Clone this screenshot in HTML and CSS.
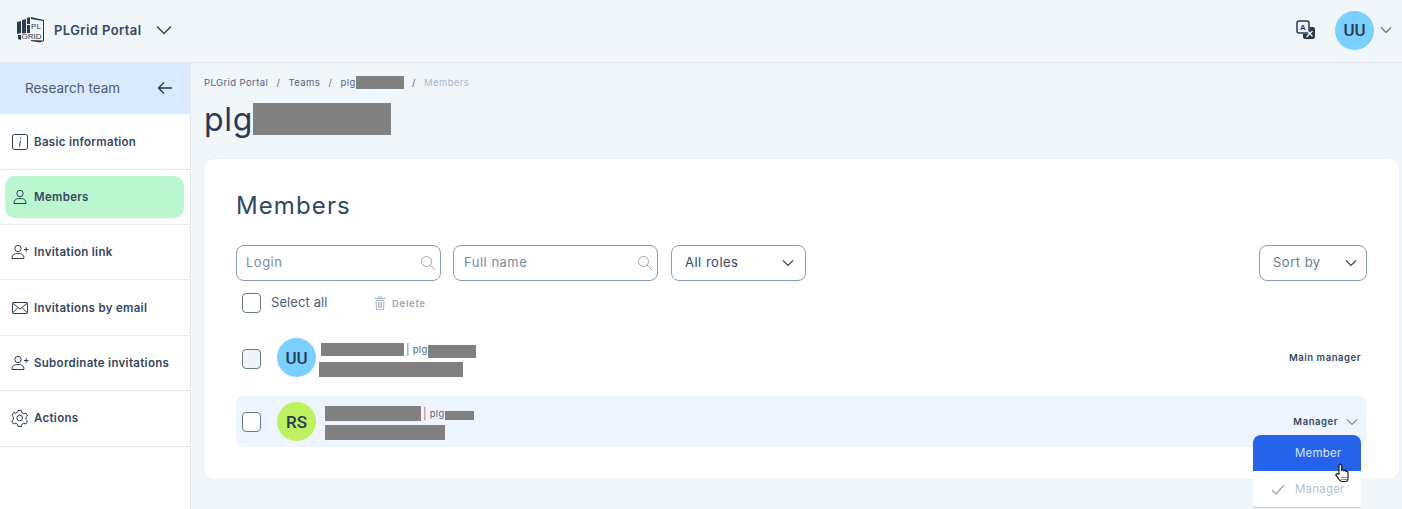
FILE: index.html
```html
<!DOCTYPE html>
<html lang="en">
<head>
<meta charset="utf-8">
<title>PLGrid Portal</title>
<link rel="stylesheet" href="styles.css">
</head>
<body>
<header class="topbar">
  <div class="brand">
    <svg class="logo" width="30" height="30" viewBox="0 0 30 30">
      <path class="logo-dark" d="M1 7l4-1v12l-4 1zM6 5l4-1v14l-4 .5zM11 3l3-1v7h-3zM11 10h3v8h-3z"/>
      <path class="logo-dark" d="M2 20h3v5l-3-1zM15 2l13 3v21l-4 1.500-9-1.500v-1l12 .5V6L15 4z"/>
      <text class="logo-text" x="20" y="14" text-anchor="middle">PL</text>
      <text class="logo-text" x="15.500" y="24" text-anchor="middle">GRID</text>
    </svg>
    <span class="brand-name">PLGrid Portal</span>
    <svg class="brand-caret" width="16" height="10" viewBox="0 0 16 10"><path d="M1 1.500l7 7 7-7"/></svg>
  </div>
  <div class="top-right">
    <svg class="translate" width="20" height="20" viewBox="0 0 20 20">
      <rect class="tr-box" x="1" y="1" width="12" height="12" rx="2"/>
      <path class="tr-dark" d="M13.800 7H17a2 2 0 0 1 2 2v8a2 2 0 0 1-2 2H9a2 2 0 0 1-2-2v-3h6.800z"/>
      <text class="tr-a" x="7" y="10.200" text-anchor="middle">A</text>
      <path class="tr-x" d="M10.500 17l6-6M12 11.500l4.500 5"/>
    </svg>
    <span class="avatar avatar-blue">UU</span>
    <svg class="user-caret" width="12" height="8" viewBox="0 0 12 8"><path d="M1 1.500l5 5 5-5"/></svg>
  </div>
</header>
<div class="shell">
  <aside class="sidebar">
    <div class="side-head">
      <span>Research team</span>
      <svg class="stroke-icon head-arrow" width="16" height="14" viewBox="0 0 16 14"><path d="M15 7H2M7 1.500L1.500 7 7 12.500"/></svg>
    </div>
    <nav class="side-nav">
      <div class="side-item">
        <svg class="stroke-icon" width="18" height="18" viewBox="0 0 18 18"><rect x="1.500" y="1.500" width="15" height="15" rx="2"/><path d="M9.500 7.500l-1 6M9.700 4.500v1.400"/></svg>
        <span>Basic information</span>
      </div>
      <div class="side-item side-item-active">
        <div class="side-pill">
          <svg class="stroke-icon" width="18" height="18" viewBox="0 0 18 18"><circle cx="9" cy="5.500" r="3.200"/><path d="M3 15.500c0-4 2.500-5 6-5s6 1 6 5z"/></svg>
          <span>Members</span>
        </div>
      </div>
      <div class="side-item">
        <svg class="stroke-icon" width="18" height="18" viewBox="0 0 18 18"><circle cx="7" cy="5.500" r="3.200"/><path d="M1 15.500c0-4 2.500-5 6-5s6 1 6 5zM13 6.500h4.500M15.200 4.200v4.600"/></svg>
        <span>Invitation link</span>
      </div>
      <div class="side-item">
        <svg class="stroke-icon" width="18" height="18" viewBox="0 0 18 18"><rect x="1.500" y="3.500" width="15" height="11" rx="1"/><path d="M1.500 4l7.500 6 7.500-6M1.500 14l5.500-5.500M16.500 14L11 8.500"/></svg>
        <span>Invitations by email</span>
      </div>
      <div class="side-item">
        <svg class="stroke-icon" width="18" height="18" viewBox="0 0 18 18"><circle cx="7" cy="5.500" r="3.200"/><path d="M1 15.500c0-4 2.500-5 6-5s6 1 6 5zM13 6.500h4.500M15.200 4.200v4.600"/></svg>
        <span>Subordinate invitations</span>
      </div>
      <div class="side-item">
        <svg class="stroke-icon" width="18" height="18" viewBox="0 0 18 18"><circle cx="8.700" cy="9" r="2.800"/><path d="M7 1.500h3.400l.5 2.200 1.700 1 2.200-.7 1.700 3-1.600 1.500v2l1.600 1.500-1.700 3-2.200-.7-1.700 1-.5 2.200H7l-.5-2.200-1.700-1-2.200.7-1.700-3L2.500 10V8L.9 6.500l1.700-3 2.200.7 1.700-1z"/></svg>
        <span>Actions</span>
      </div>
    </nav>
  </aside>
  <main class="content">
    <div class="crumbs">
      <span>PLGrid Portal</span><i>/</i>
      <span>Teams</span><i>/</i>
      <span>plg<b class="redact crumb-redact"></b></span><i>/</i>
      <span class="crumb-current">Members</span>
    </div>
    <h1 class="page-title">plg<b class="redact title-redact"></b></h1>
    <section class="card">
      <h2 class="card-title">Members</h2>
      <div class="filters">
        <div class="field field-search"><span>Login</span><svg class="search" width="16" height="16" viewBox="0 0 16 16"><circle cx="6.500" cy="6.500" r="5"/><path d="M10.200 10.200l4.800 4.800"/></svg></div>
        <div class="field field-search"><span>Full name</span><svg class="search" width="16" height="16" viewBox="0 0 16 16"><circle cx="6.500" cy="6.500" r="5"/><path d="M10.200 10.200l4.800 4.800"/></svg></div>
        <div class="field field-select"><span>All roles</span><svg class="select-caret" width="12" height="8" viewBox="0 0 12 8"><path d="M1 1.500l5 5 5-5"/></svg></div>
        <div class="field field-sort"><span>Sort by</span><svg class="select-caret" width="12" height="8" viewBox="0 0 12 8"><path d="M1 1.500l5 5 5-5"/></svg></div>
      </div>
      <div class="select-row">
        <span class="check"></span>
        <span class="select-label">Select all</span>
        <svg class="trash" width="14" height="14" viewBox="0 0 14 14"><path d="M1.500 2.500h11M5 2.500V1h4v1.500M3 4.500l.5 9h7l.5-9zM5.500 6v6M7 6v6M8.500 6v6"/></svg>
        <span class="delete-label">Delete</span>
      </div>
      <div class="member member-first">
        <span class="check check-tint"></span>
        <span class="avatar avatar-blue">UU</span>
        <div class="member-info info-first">
          <div class="member-line"><b class="redact r-name-1"></b><i class="pipe">|</i><span class="login">plg</span><b class="redact r-login-1"></b></div>
          <b class="redact r-mail-1"></b>
        </div>
        <span class="role">Main manager</span>
      </div>
      <div class="member member-hover">
        <span class="check"></span>
        <span class="avatar avatar-green">RS</span>
        <div class="member-info info-second">
          <div class="member-line"><b class="redact r-name-2"></b><i class="pipe">|</i><span class="login">plg</span><b class="redact r-login-2"></b></div>
          <b class="redact r-mail-2"></b>
        </div>
        <span class="role">Manager</span>
        <svg class="role-caret" width="12" height="8" viewBox="0 0 12 8"><path d="M1 1.500l5 5 5-5"/></svg>
        <div class="menu">
          <div class="menu-item menu-item-on">Member</div>
          <div class="menu-item menu-item-off">
            <svg class="tick" width="14" height="11" viewBox="0 0 14 11"><path d="M1 6l4 4 8-9"/></svg>
            Manager
          </div>
          <svg class="hand" width="18" height="20" viewBox="0 0 18 20"><path d="M5 11V2.500a1.300 1.300 0 0 1 2.600 0V8l.3-1.200c1-.5 2 0 2 .8.800-.6 2-.2 2 .8.800-.5 2.100 0 2.100 1V15c0 2-1 3.500-2.500 3.500H7.500c-1.500 0-2-1-3-3L2 12.500c-.7-1.200.8-2.500 2-1.300z"/><path class="hand-lines" d="M8 14v3M10 14v3M12 14v3"/></svg>
        </div>
      </div>
    </section>
  </main>
</div>
</body>
</html>
```
FILE: styles.css
```css
* { box-sizing: border-box; }
html, body { margin: 0; height: 509px; overflow: hidden; }
body {
  background: #f1f6fa;
  color: #2b3a55;
  font-family: "Inter", "Open Sans", sans-serif;
}
b, i { font-style: normal; font-weight: normal; }

.topbar {
  height: 63px;
  display: flex;
  align-items: center;
  justify-content: space-between;
  border-bottom: 1px solid #e4e8ee;
  padding: 0 16px 2px;
}
.brand { display: flex; align-items: center; }
.logo { margin-right: 8px; }
.logo-dark { fill: #2b3a4d; }
.logo-text { font: 400 8px "Liberation Sans", sans-serif; fill: #2b3a4d; }
.brand-name { font-size: 13px; font-weight: 600; letter-spacing: .4px; color: #35475f; width: 102px; white-space: nowrap; }
.brand-caret { fill: none; stroke: #2b3a55; stroke-width: 1.300; }
.top-right { display: flex; align-items: center; margin-right: -6px; }
.translate { margin-right: 19px; }
.tr-box { fill: #f1f6fa; stroke: #2b3a4d; stroke-width: 1.500; }
.tr-dark { fill: #2b3a4d; }
.tr-a { font: 700 8px "Liberation Sans", sans-serif; fill: #2b3a4d; }
.tr-x { fill: none; stroke: #f1f6fa; stroke-width: 1.200; }
.user-caret { margin-left: 6px; fill: none; stroke: #5f6f87; stroke-width: 1.200; }

.avatar {
  width: 39px;
  height: 39px;
  border-radius: 50%;
  display: flex;
  align-items: center;
  justify-content: center;
  flex: none;
  font-family: "Roboto", sans-serif;
  font-size: 17px;
  font-weight: 500;
  color: #2b3a55;
}
.avatar-blue { background: #7ad0ff; }
.avatar-green { background: #bff05f; }

.shell { display: flex; height: 446px; }
.sidebar {
  width: 191px;
  flex: none;
  background: #fff;
  border-right: 1px solid #e4e8ee;
}
.side-head {
  height: 51px;
  background: #dbe9fe;
  display: flex;
  align-items: center;
  justify-content: space-between;
  padding: 0 17px 2px 25px;
  font-size: 13.500px;
  color: #4d5c75;
}
.stroke-icon { fill: none; stroke: #2b3a55; stroke-width: 1; flex: none; }
.head-arrow { stroke-width: 1.400; }
.side-nav { padding-top: .4px; }
.side-item {
  height: 55.360px;
  display: flex;
  align-items: center;
  gap: 5px;
  padding: 0 0 0 11px;
  border-bottom: 1px solid #e4e8ee;
  font-size: 11.500px;
  font-weight: 600;
  letter-spacing: .3px;
  color: #35475f;
  white-space: nowrap;
}
.side-item-active { padding: 0 6px 0 5px; }
.side-pill {
  flex: 1;
  height: 42px;
  background: #baf7d0;
  border-radius: 10px;
  display: flex;
  align-items: center;
  gap: 5px;
  padding-left: 6px;
}

.content { flex: 1; padding: 0 3px 0 13px; min-width: 0; }
.crumbs {
  height: 39px;
  display: flex;
  align-items: center;
  font-size: 9.500px;
  letter-spacing: .4px;
  color: #55637a;
  white-space: nowrap;
}
.crumbs i { margin: 0 8.250px; }
.crumbs span { display: flex; align-items: center; }
.crumb-current { color: #a9b7cc; }
.redact { display: block; background: #808080; flex: none; }
.crumb-redact { width: 48px; height: 13px; }
.page-title {
  margin: 0;
  height: 57px;
  display: flex;
  align-items: flex-start;
  font-size: 32px;
  font-weight: 400;
  letter-spacing: .7px;
  line-height: 36px;
  color: #2b3a55;
}
.title-redact { width: 138px; height: 32px; margin-top: 1px; }
.card {
  height: 320px;
  background: #fff;
  border-radius: 10px;
  padding: 31px 32px 0;
  box-shadow: 0 0 2px rgba(40, 60, 90, .08);
}
.card-title {
  margin: 0 0 23px;
  height: 32px;
  font-size: 24px;
  line-height: 32px;
  font-weight: 400;
  letter-spacing: 1.100px;
  color: #35475f;
}
.filters { display: flex; gap: 12px; height: 36px; }
.field {
  height: 36px;
  border: 1px solid #8c9bb0;
  border-radius: 8px;
  display: flex;
  align-items: center;
  justify-content: space-between;
  padding-bottom: 2px;
  font-size: 13px;
  letter-spacing: .5px;
  color: #7b8aa3;
  background: #fff;
}
.field-search { width: 205px; padding-left: 9px; padding-right: 2px; }
.field-search + .field-search { padding-left: 10px; }
.field-select { width: 135px; margin-left: 1px; padding-left: 13px; padding-right: 11px; color: #35475f; }
.field-sort { width: 108px; margin-left: auto; padding-left: 13px; padding-right: 9px; color: #6b7a92; }
.search { fill: none; stroke: #9ba8bb; stroke-width: 1; margin: 2px 2px 0 0; }
.select-caret { fill: none; stroke: #35475f; stroke-width: 1.200; margin-top: 2px; }
.select-row {
  display: flex;
  align-items: center;
  height: 52px;
  padding: 0 0 8px 6px;
}
.check {
  width: 19px;
  height: 20px;
  flex: none;
  border: 1.500px solid #6a788c;
  border-radius: 4px;
  background: #fff;
}
.check-tint { background: #f0f4fa; margin-top: 2px; }
.select-label { margin: 0 0 2px 10px; font-size: 13px; letter-spacing: .1px; color: #4d5c75; width: 102px; }
.trash { fill: none; stroke: #a9b5c6; stroke-width: 1; }
.delete-label { margin-left: 5px; font-size: 9.500px; font-weight: 600; letter-spacing: .7px; color: #98a6bb; }
.member {
  position: relative;
  height: 51px;
  margin-bottom: 12px;
  border-radius: 8px;
  display: flex;
  align-items: center;
  padding: 0 6px;
}
.member-first { padding-bottom: 2px; }
.member-hover { background: #eef5fe; }
.member .avatar { margin-left: 16px; }
.member-info { display: flex; flex-direction: column; gap: 5px; }
.info-first { margin: 4px 0 0 3px; }
.info-second { margin: 3px 0 0 9px; gap: 4px; }
.member-line { display: flex; align-items: center; height: 15px; font-size: 9.500px; color: #55637a; }
.login { letter-spacing: .3px; }
.pipe { margin: 0 3px 0 2px; color: #a0697e; font-size: 11px; }
.r-name-1 { width: 83px; height: 13px; margin-left: 2px; }
.r-login-1 { width: 48px; height: 13px; margin-top: 3px; }
.r-mail-1 { width: 144px; height: 15px; }
.r-name-2 { width: 96px; height: 15px; }
.r-login-2 { width: 29px; height: 9px; margin-top: 3px; }
.r-mail-2 { width: 120px; height: 15px; }
.role {
  margin-left: auto;
  font-size: 9.500px;
  font-weight: 600;
  letter-spacing: .55px;
  color: #35475f;
  white-space: nowrap;
}
.member-hover .role { margin-right: 8px; }
.role-caret { fill: none; stroke: #35475f; stroke-width: 1; margin-right: 3px; }
.menu {
  position: absolute;
  left: 1017px;
  top: 39px;
  width: 108px;
  border-radius: 8px 8px 0 0;
  background: #fff;
  font-size: 11.500px;
  letter-spacing: .2px;
}
.menu-item {
  height: 36px;
  display: flex;
  align-items: center;
  padding-left: 42px;
  position: relative;
}
.menu-item-on { background: #2563eb; color: #d6e4fb; border-radius: 8px 8px 0 0; }
.menu-item-off { color: #b3bfd0; border-bottom: 1px solid #c4ccd6; height: 37px; }
.tick { position: absolute; left: 18px; top: 13px; fill: none; stroke: #9aa8bc; stroke-width: 1.300; }
.hand { position: absolute; left: 81px; top: 28px; fill: #fff; stroke: #1b1b1b; stroke-width: 1.200; }
.hand-lines { fill: none; stroke-width: 1; stroke-dasharray: 1 1; }
```
